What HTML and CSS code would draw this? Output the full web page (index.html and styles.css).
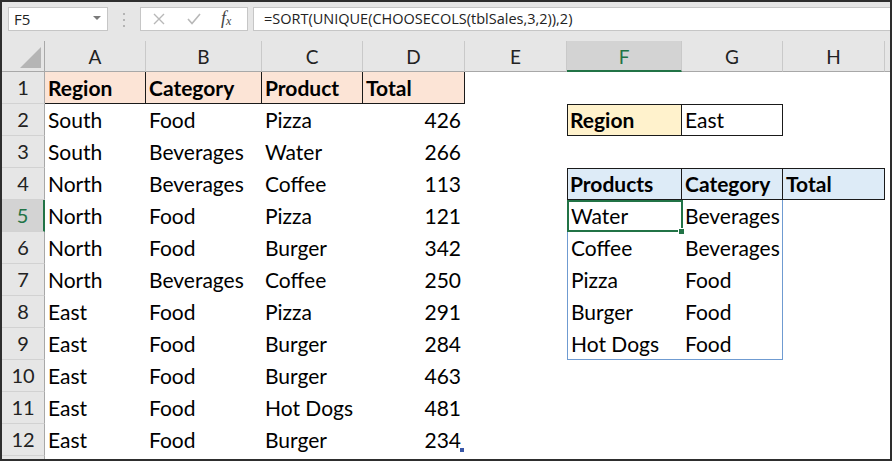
FILE: index.html
```html
<!DOCTYPE html>
<html>
<head>
	<meta charset="utf-8">
	<title>Sheet</title>
	<link rel="stylesheet" href="styles.css">
</head>
<body>
	<div class="window">
		<div class="toolbar">
			<div class="namebox"><span>F5</span><span class="caret"></span></div>
			<svg class="grip" width="4" height="16" viewBox="0 0 4 16">
				<rect x="1" y="1" width="2" height="2" fill="#b4b4b4"/>
				<rect x="1" y="7" width="2" height="2" fill="#b4b4b4"/>
				<rect x="1" y="13" width="2" height="2" fill="#b4b4b4"/>
			</svg>
			<div class="fxbox">
				<svg class="ico-x" width="12" height="12" viewBox="0 0 12 12">
					<path d="M1 1 L11 11 M11 1 L1 11" stroke="#b8b8b8" stroke-width="1.4" fill="none"/>
				</svg>
				<svg class="ico-ok" width="14" height="12" viewBox="0 0 14 12">
					<path d="M1 6 L5 10.5 L13 1" stroke="#b8b8b8" stroke-width="1.6" fill="none"/>
				</svg>
				<span class="fx"><i>f</i><sub>x</sub></span>
			</div>
			<div class="formula">=SORT(UNIQUE(CHOOSECOLS(tblSales,3,2)),2)</div>
		</div>

		<div class="sheet">
			<!-- column headings -->
			<div class="corner">
				<svg width="22" height="22" viewBox="0 0 22 22"><polygon points="0,21 21,21 21,0" fill="#b5b5b5"/></svg>
			</div>
			<div class="ch">A</div>
			<div class="ch">B</div>
			<div class="ch">C</div>
			<div class="ch">D</div>
			<div class="ch">E</div>
			<div class="ch ch-sel">F</div>
			<div class="ch">G</div>
			<div class="ch">H</div>
			<div class="ch ch-end"></div>

			<!-- row 1 -->
			<div class="rh">1</div>
			<div class="c th">Region</div>
			<div class="c th">Category</div>
			<div class="c th">Product</div>
			<div class="c th">Total</div>
			<div class="c"></div><div class="c"></div><div class="c"></div><div class="c"></div><div class="c"></div>

			<!-- row 2 -->
			<div class="rh">2</div>
			<div class="c">South</div>
			<div class="c">Food</div>
			<div class="c">Pizza</div>
			<div class="c num">426</div>
			<div class="c"></div>
			<div class="c crit-label">Region</div>
			<div class="c crit-value">East</div>
			<div class="c"></div><div class="c"></div>

			<!-- row 3 -->
			<div class="rh">3</div>
			<div class="c">South</div>
			<div class="c">Beverages</div>
			<div class="c">Water</div>
			<div class="c num">266</div>
			<div class="c"></div><div class="c"></div><div class="c"></div><div class="c"></div><div class="c"></div>

			<!-- row 4 -->
			<div class="rh">4</div>
			<div class="c">North</div>
			<div class="c">Beverages</div>
			<div class="c">Coffee</div>
			<div class="c num">113</div>
			<div class="c"></div>
			<div class="c out-head out-first">Products</div>
			<div class="c out-head">Category</div>
			<div class="c out-head">Total</div>
			<div class="c"></div>

			<!-- row 5 -->
			<div class="rh rh-sel">5</div>
			<div class="c">North</div>
			<div class="c">Food</div>
			<div class="c">Pizza</div>
			<div class="c num">121</div>
			<div class="c"></div>
			<div class="c spill-l active">Water</div>
			<div class="c spill-r">Beverages</div>
			<div class="c"></div><div class="c"></div>

			<!-- row 6 -->
			<div class="rh">6</div>
			<div class="c">North</div>
			<div class="c">Food</div>
			<div class="c">Burger</div>
			<div class="c num">342</div>
			<div class="c"></div>
			<div class="c spill-l">Coffee</div>
			<div class="c spill-r">Beverages</div>
			<div class="c"></div><div class="c"></div>

			<!-- row 7 -->
			<div class="rh">7</div>
			<div class="c">North</div>
			<div class="c">Beverages</div>
			<div class="c">Coffee</div>
			<div class="c num">250</div>
			<div class="c"></div>
			<div class="c spill-l">Pizza</div>
			<div class="c spill-r">Food</div>
			<div class="c"></div><div class="c"></div>

			<!-- row 8 -->
			<div class="rh">8</div>
			<div class="c">East</div>
			<div class="c">Food</div>
			<div class="c">Pizza</div>
			<div class="c num">291</div>
			<div class="c"></div>
			<div class="c spill-l">Burger</div>
			<div class="c spill-r">Food</div>
			<div class="c"></div><div class="c"></div>

			<!-- row 9 -->
			<div class="rh">9</div>
			<div class="c">East</div>
			<div class="c">Food</div>
			<div class="c">Burger</div>
			<div class="c num">284</div>
			<div class="c"></div>
			<div class="c spill-l spill-b">Hot Dogs</div>
			<div class="c spill-r spill-b">Food</div>
			<div class="c"></div><div class="c"></div>

			<!-- row 10 -->
			<div class="rh">10</div>
			<div class="c">East</div>
			<div class="c">Food</div>
			<div class="c">Burger</div>
			<div class="c num">463</div>
			<div class="c"></div><div class="c"></div><div class="c"></div><div class="c"></div><div class="c"></div>

			<!-- row 11 -->
			<div class="rh">11</div>
			<div class="c">East</div>
			<div class="c">Food</div>
			<div class="c">Hot Dogs</div>
			<div class="c num">481</div>
			<div class="c"></div><div class="c"></div><div class="c"></div><div class="c"></div><div class="c"></div>

			<!-- row 12 -->
			<div class="rh">12</div>
			<div class="c">East</div>
			<div class="c">Food</div>
			<div class="c">Burger</div>
			<div class="c num tbl-end">234</div>
			<div class="c"></div><div class="c"></div><div class="c"></div><div class="c"></div><div class="c"></div>

			<!-- row 13 (cut off) -->
			<div class="rh"></div>
		</div>
	</div>
</body>
</html>
```

FILE: styles.css
```css
body{
	margin: 0;
	background: #fff;
}
.window{
	width: 892px;
	height: 461px;
	box-sizing: border-box;
	border: 2px solid #2e2e2e;
	background: #fff;
	overflow: hidden;
	font-family: Lato, "Liberation Sans", sans-serif;
	color: #000;
}

/* formula bar */
.toolbar{
	height: 39px;
	box-sizing: border-box;
	background: #e6e6e6;
	display: flex;
	align-items: flex-start;
	padding: 5px 0 0 6px;
}
.namebox{
	width: 100px;
	height: 24px;
	box-sizing: border-box;
	border: 1px solid #c6c6c6;
	background: #fff;
	display: flex;
	align-items: center;
	justify-content: space-between;
	padding: 0 6px 0 5px;
	font: 15px "Open Sans", sans-serif;
	color: #222;
}
.caret{
	width: 0;
	height: 0;
	border-left: 4px solid transparent;
	border-right: 4px solid transparent;
	border-top: 4px solid #7a7a7a;
	margin-top: -3px;
}
.grip{
	margin: 5px 0 0 14px;
}
.fxbox{
	width: 108px;
	height: 24px;
	box-sizing: border-box;
	margin-left: 14px;
	border: 1px solid #c6c6c6;
	background: #fff;
	display: flex;
	align-items: center;
	padding-left: 12px;
}
.ico-ok{
	margin-left: 22px;
}
.fx{
	margin-left: 20px;
	font: 18px "Liberation Serif", serif;
	color: #444;
	line-height: 18px;
}
.fx sub{
	font-size: 12px;
	font-style: italic;
	vertical-align: -1px;
}
.formula{
	flex: 1;
	height: 24px;
	box-sizing: border-box;
	margin-left: 5px;
	border: 1px solid #c6c6c6;
	border-right: none;
	background: #fff;
	padding-left: 10px;
	font: 14.5px/22px "Open Sans", sans-serif;
	color: #222;
	white-space: nowrap;
}

/* grid */
.sheet{
	display: grid;
	grid-template-columns: 43px 101px 116px 101px 102px 102px 115px 101px 102px 1fr;
	grid-template-rows: 31px repeat(13, 32px);
}
.corner{
	background: #e6e6e6;
	border-right: 1px solid #a8a8a8;
	border-bottom: 1px solid #a8a8a8;
	box-sizing: border-box;
	padding: 6px 0 0 18px;
}
.corner svg{
	display: block;
}
.ch{
	background: #e6e6e6;
	border-right: 1px solid #c9c9c9;
	border-bottom: 1px solid #a8a8a8;
	box-sizing: border-box;
	text-align: center;
	font-size: 19px;
	line-height: 32px;
	color: #222;
}
.ch-sel{
	background: #d3d3d3;
	color: #217346;
	border-bottom: 2px solid #217346;
}
.ch-end{
	border-right: none;
}
.rh{
	background: #e6e6e6;
	border-right: 1px solid #a8a8a8;
	border-bottom: 1px solid #d2d2d2;
	box-sizing: border-box;
	text-align: center;
	font-size: 20px;
	line-height: 31px;
	color: #222;
}
.rh-sel{
	background: #d3d3d3;
	color: #217346;
	border-right: 2px solid #217346;
}

.c{
	box-sizing: border-box;
	padding: 0 3px;
	font-size: 21px;
	line-height: 31px;
	white-space: nowrap;
	position: relative;
}
.num{
	text-align: right;
	padding-right: 4px;
}
.th{
	background: #fce4d6;
	font-weight: bold;
	border-right: 1px solid #1a1a1a;
	border-bottom: 1px solid #1a1a1a;
}
.crit-label{
	background: #fff2cc;
	font-weight: bold;
	border: 1px solid #1a1a1a;
	line-height: 29px;
	padding-left: 2px;
}
.crit-value{
	border: 1px solid #1a1a1a;
	border-left: none;
	line-height: 29px;
}
.out-head{
	background: #ddebf7;
	font-weight: bold;
	border: 1px solid #1a1a1a;
	border-left: none;
	line-height: 29px;
}
.out-first{
	border-left: 1px solid #1a1a1a;
	padding-left: 2px;
}
.spill-l{
	border-left: 1px solid #6f9bd1;
	padding-left: 3px;
}
.spill-r{
	border-right: 1px solid #6f9bd1;
}
.spill-b{
	border-bottom: 1px solid #6f9bd1;
}
.active::after{
	content: "";
	position: absolute;
	left: -1px;
	top: 0;
	right: -1px;
	bottom: 0;
	border: 2px solid #217346;
}
.active::before{
	content: "";
	position: absolute;
	right: -3px;
	bottom: -3px;
	width: 5px;
	height: 5px;
	background: #217346;
	border: 1px solid #fff;
	z-index: 1;
}
.tbl-end::after{
	content: "";
	position: absolute;
	right: 1px;
	bottom: 4px;
	width: 4px;
	height: 4px;
	background: #3956a6;
}
```
